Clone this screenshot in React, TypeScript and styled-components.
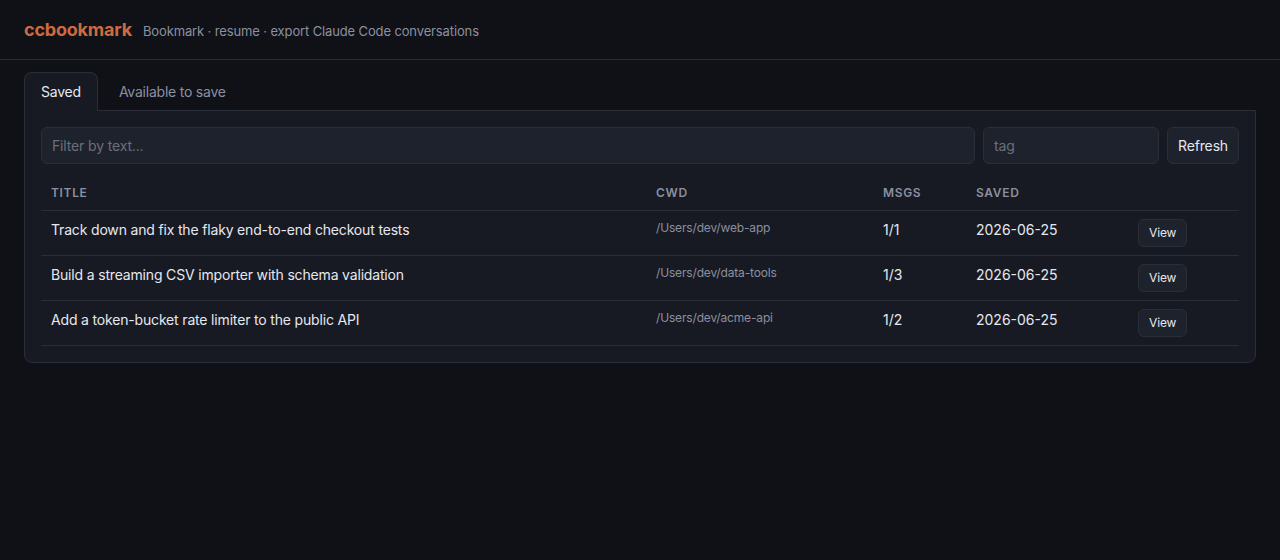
import React from "react";
import styled, { createGlobalStyle } from "styled-components";

const Global = createGlobalStyle`
  html, body { margin: 0; padding: 0; background: #0f1117; }
  body { font-family: Inter, "Liberation Sans", sans-serif; font-size: 14px; line-height: 1.5; color: #e6e8ee; }
  * { box-sizing: border-box; }
`;

const Header = styled.header`
  display: flex;
  align-items: baseline;
  gap: 11px;
  height: 60px;
  padding: 18px 24px 0;
  border-bottom: 1px solid #2a2e39;
`;
const Brand = styled.h1`
  margin: 0;
  font-size: 18px;
  line-height: 24px;
  font-weight: 700;
  letter-spacing: -0.2px;
  color: #cf6a40;
`;
const Tagline = styled.span`
  font-size: 13px;
  letter-spacing: -0.13px;
  color: #8b90a0;
`;
const Main = styled.main`
  padding: 12px 24px;
`;
const Tabs = styled.nav`
  display: flex;
  gap: 4px;
  margin-bottom: -1px;
`;
const Tab = styled.button<{ $active?: boolean }>`
  height: 39px;
  padding: 0 16px 2px;
  font: inherit;
  letter-spacing: -0.22px;
  color: ${(p) => (p.$active ? "#e6e8ee" : "#8b90a0")};
  background: ${(p) => (p.$active ? "#171a23" : "transparent")};
  border: 1px solid ${(p) => (p.$active ? "#2a2e39" : "transparent")};
  border-bottom: 0;
  border-radius: 8px 8px 0 0;
`;
const Card = styled.section`
  padding: 16px;
  background: #171a23;
  border: 1px solid #2a2e39;
  border-radius: 0 0 8px 8px;
`;
const Toolbar = styled.div`
  display: flex;
  gap: 8px;
  margin-bottom: 12px;
`;
const Input = styled.input<{ $w?: number }>`
  ${(p) => (p.$w ? `width: ${p.$w}px;` : "flex: 1; min-width: 0;")}
  height: 37px;
  padding: 0 10px;
  font: inherit;
  letter-spacing: -0.15px;
  color: #e6e8ee;
  background: #1e222d;
  border: 1px solid #2a2e39;
  border-radius: 6px;
  &::placeholder { color: #6b6f7a; opacity: 1; }
`;
const Button = styled.button`
  height: 37px;
  padding: 0 10px;
  font: inherit;
  letter-spacing: -0.15px;
  color: #e6e8ee;
  background: #1e222d;
  border: 1px solid #2a2e39;
  border-radius: 6px;
`;
const SmallButton = styled(Button)`
  display: block;
  height: 28px;
  font-size: 12px;
`;
const Table = styled.table`
  width: 100%;
  table-layout: fixed;
  border-collapse: collapse;
`;
const Th = styled.th`
  padding: 8px 10px;
  text-align: left;
  font-size: 12px;
  font-weight: 600;
  line-height: 18px;
  letter-spacing: 0.055em;
  text-transform: uppercase;
  color: #8b90a0;
  border-bottom: 1px solid #2a2e39;
`;
const Td = styled.td`
  padding: 8px 10px;
  vertical-align: top;
  border-bottom: 1px solid #2a2e39;
`;
const Title = styled.span`
  letter-spacing: -0.17px;
`;
const Path = styled.span`
  display: block;
  font-size: 12px;
  letter-spacing: -0.16px;
  color: #8b90a0;
`;

const rows = [
  ["Track down and fix the flaky end-to-end checkout tests", "/Users/dev/web-app", "1/1"],
  ["Build a streaming CSV importer with schema validation", "/Users/dev/data-tools", "1/3"],
  ["Add a token-bucket rate limiter to the public API", "/Users/dev/acme-api", "1/2"],
];

export default function App() {
  return (
    <>
      <Global />
      <Header>
        <Brand>ccbookmark</Brand>
        <Tagline>Bookmark · resume · export Claude Code conversations</Tagline>
      </Header>
      <Main>
        <Tabs>
          <Tab $active>Saved</Tab>
          <Tab>Available to save</Tab>
        </Tabs>
        <Card>
          <Toolbar>
            <Input placeholder="Filter by text..." />
            <Input $w={176} placeholder="tag" />
            <Button>Refresh</Button>
          </Toolbar>
          <Table>
            <colgroup>
              <col style={{ width: 605 }} />
              <col style={{ width: 227 }} />
              <col style={{ width: 93 }} />
              <col style={{ width: 162 }} />
              <col />
            </colgroup>
            <thead>
              <tr>
                <Th>Title</Th>
                <Th>Cwd</Th>
                <Th>Msgs</Th>
                <Th>Saved</Th>
                <Th />
              </tr>
            </thead>
            <tbody>
              {rows.map(([title, cwd, msgs]) => (
                <tr key={cwd}>
                  <Td><Title>{title}</Title></Td>
                  <Td><Path>{cwd}</Path></Td>
                  <Td>{msgs}</Td>
                  <Td>2026-06-25</Td>
                  <Td><SmallButton>View</SmallButton></Td>
                </tr>
              ))}
            </tbody>
          </Table>
        </Card>
      </Main>
    </>
  );
}
